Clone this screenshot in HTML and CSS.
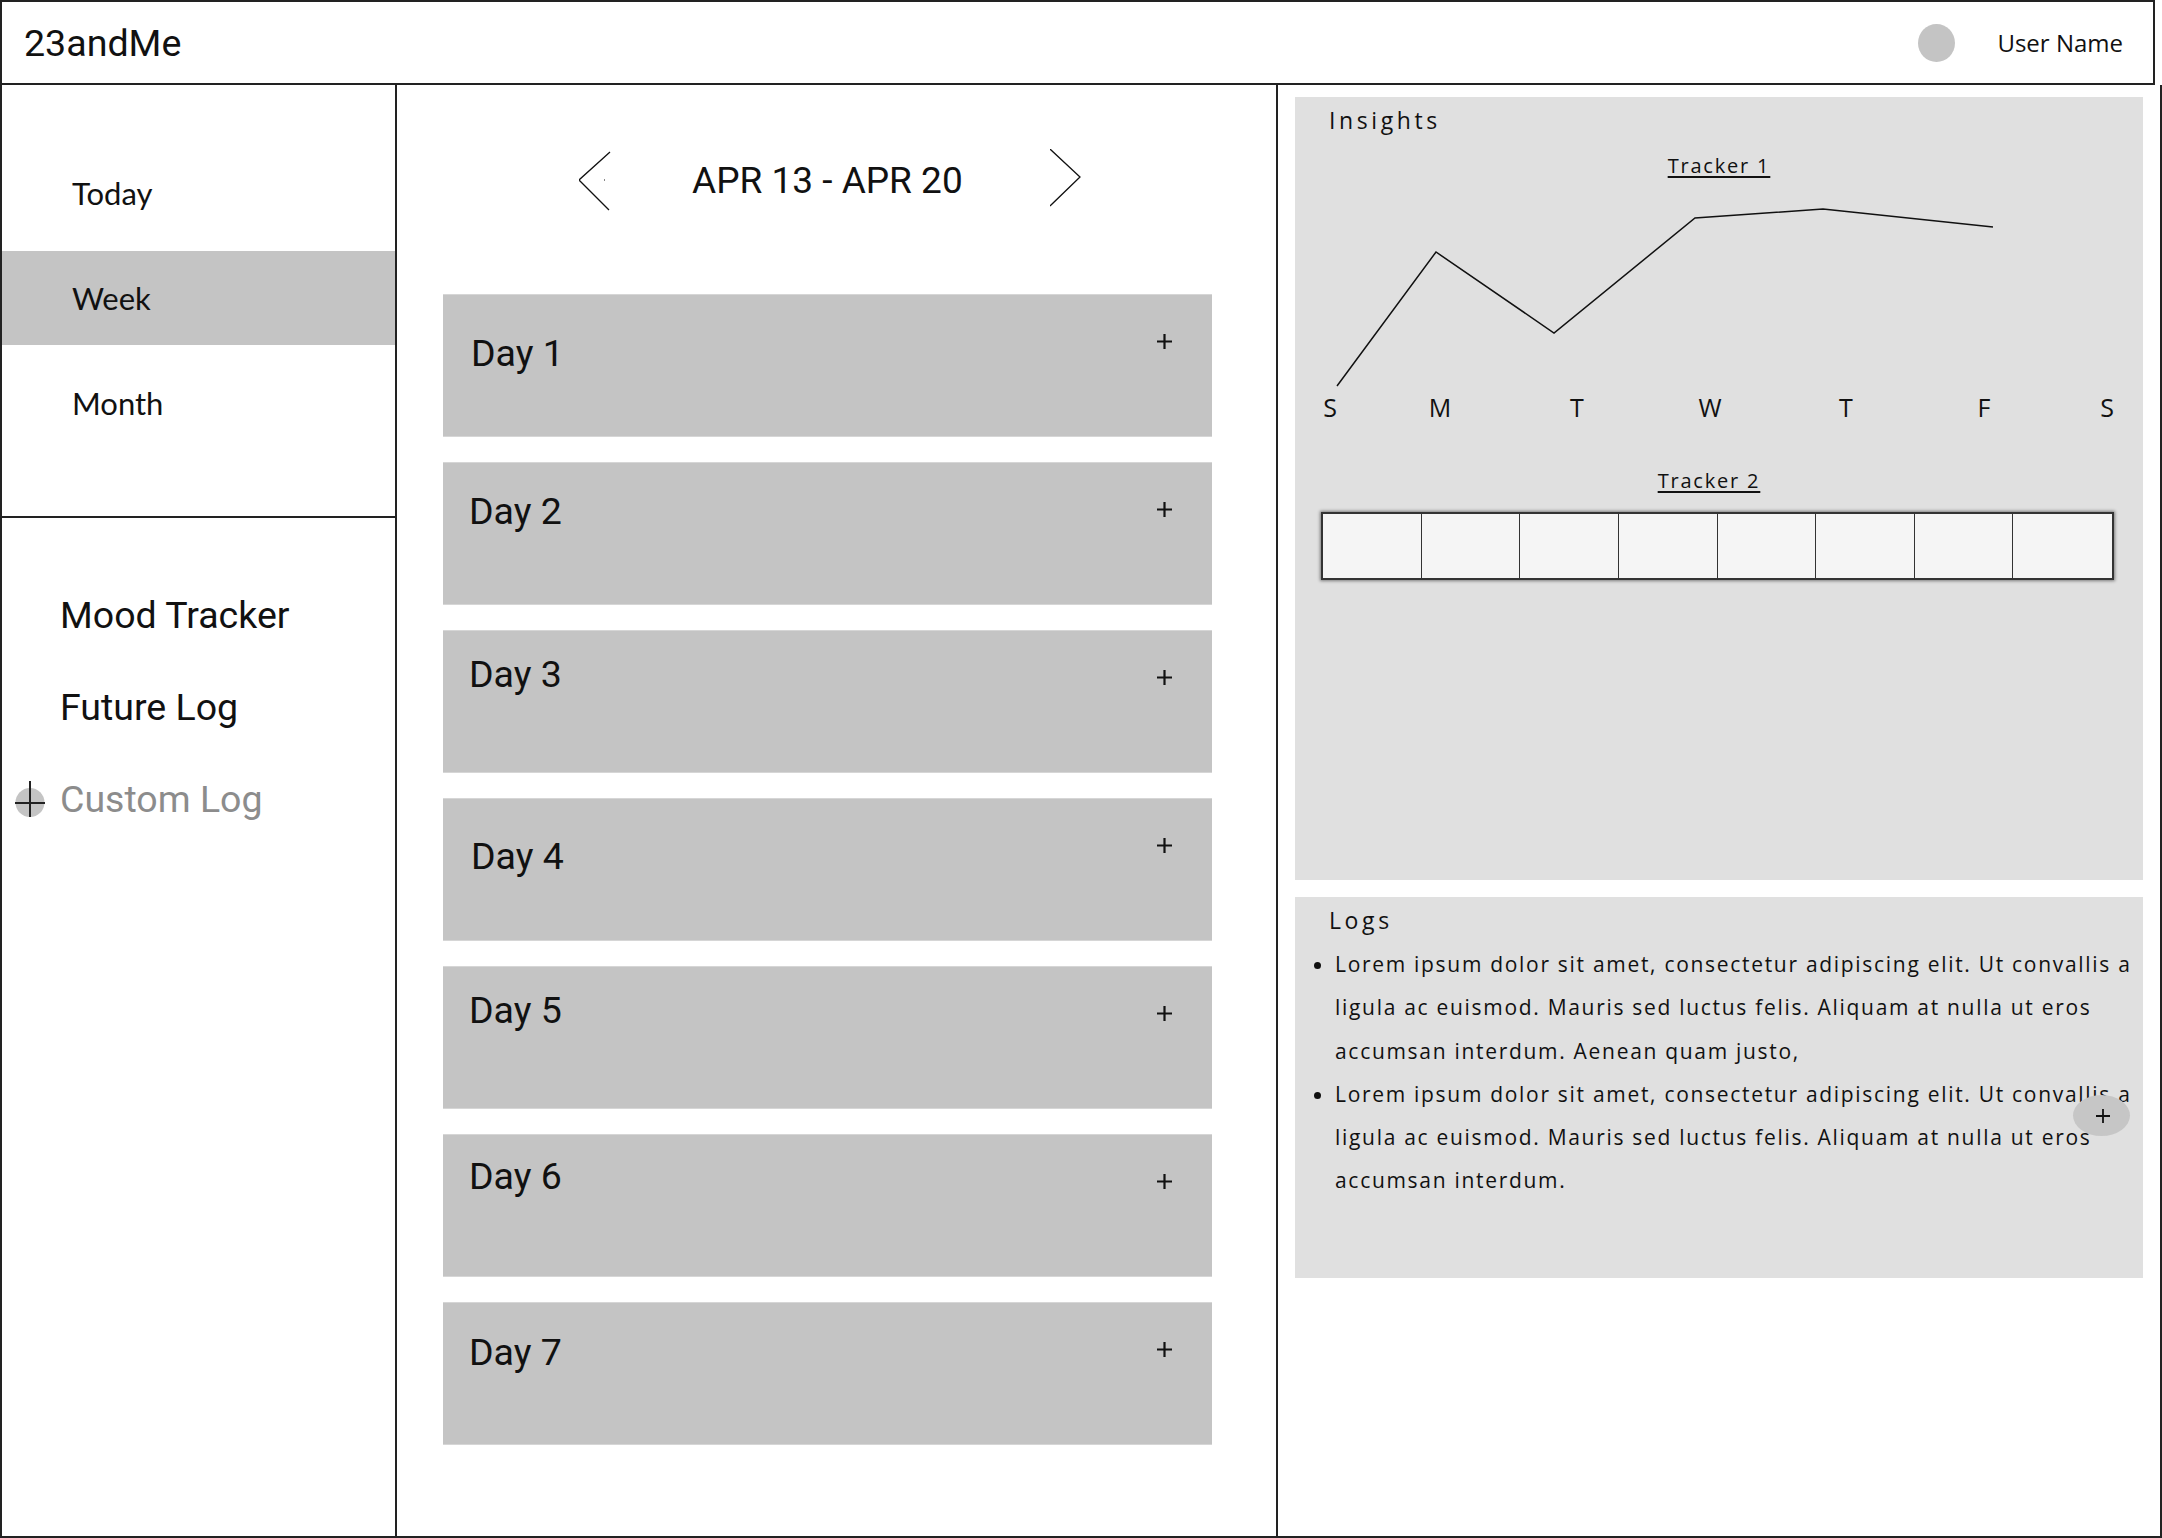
FILE: index.html
```html
<!DOCTYPE html>
<html lang="en">
<head>
<meta charset="utf-8">
<title>23andMe – Week</title>
<link rel="stylesheet" href="styles.css">
</head>
<body>
<div class="app">
  <header class="topbar">
    <div class="logo">23andMe</div>
    <div class="user">
      <span class="avatar"></span>
      <span class="user-name">User Name</span>
    </div>
  </header>

  <div class="main">
    <aside class="sidebar">
      <nav class="periods">
        <div class="period">Today</div>
        <div class="period active">Week</div>
        <div class="period">Month</div>
      </nav>
      <nav class="log-nav">
        <div class="log-link">Mood Tracker</div>
        <div class="log-link">Future Log</div>
        <div class="log-link custom">
          <svg class="add-circle" width="30" height="36" viewBox="0 0 30 36">
            <circle cx="15" cy="21.5" r="14.5" fill="#c4c4c4"/>
            <line x1="0" y1="22" x2="30" y2="22" stroke="#222" stroke-width="2"/>
            <line x1="15" y1="0" x2="15" y2="36" stroke="#222" stroke-width="2"/>
          </svg>
          <span>Custom Log</span>
        </div>
      </nav>
    </aside>

    <section class="week">
      <div class="week-nav">
        <svg class="chev chev-left" width="32" height="62" viewBox="0 0 32 62">
          <polyline points="31,3 0,31 30,61" fill="none" stroke="#111" stroke-width="1.3"/>
          <rect x="25" y="30.5" width="1" height="1" fill="#111"/>
        </svg>
        <h1 class="week-range">APR 13 - APR 20</h1>
        <svg class="chev chev-right" width="32" height="62" viewBox="0 0 32 62">
          <polyline points="0,0 30,28 0,57" fill="none" stroke="#111" stroke-width="1.3"/>
        </svg>
      </div>

      <div class="days">
        <div class="day day-1"><span class="day-label">Day 1</span><svg class="plus" width="15" height="15" viewBox="0 0 15 15"><path d="M7.5 0V15M0 7.5H15" stroke="#111" stroke-width="2.2"/></svg></div>
        <div class="day day-2"><span class="day-label">Day 2</span><svg class="plus" width="15" height="15" viewBox="0 0 15 15"><path d="M7.5 0V15M0 7.5H15" stroke="#111" stroke-width="2.2"/></svg></div>
        <div class="day day-3"><span class="day-label">Day 3</span><svg class="plus" width="15" height="15" viewBox="0 0 15 15"><path d="M7.5 0V15M0 7.5H15" stroke="#111" stroke-width="2.2"/></svg></div>
        <div class="day day-4"><span class="day-label">Day 4</span><svg class="plus" width="15" height="15" viewBox="0 0 15 15"><path d="M7.5 0V15M0 7.5H15" stroke="#111" stroke-width="2.2"/></svg></div>
        <div class="day day-5"><span class="day-label">Day 5</span><svg class="plus" width="15" height="15" viewBox="0 0 15 15"><path d="M7.5 0V15M0 7.5H15" stroke="#111" stroke-width="2.2"/></svg></div>
        <div class="day day-6"><span class="day-label">Day 6</span><svg class="plus" width="15" height="15" viewBox="0 0 15 15"><path d="M7.5 0V15M0 7.5H15" stroke="#111" stroke-width="2.2"/></svg></div>
        <div class="day day-7"><span class="day-label">Day 7</span><svg class="plus" width="15" height="15" viewBox="0 0 15 15"><path d="M7.5 0V15M0 7.5H15" stroke="#111" stroke-width="2.2"/></svg></div>
      </div>
    </section>

    <section class="panel">
      <div class="insights">
        <h2 class="box-title">Insights</h2>
        <h3 class="tracker-title">Tracker 1</h3>
        <svg class="chart" width="848" height="250" viewBox="0 0 848 250">
          <polyline points="42,207 141,73 259,154 400,39 528,30 698,48" fill="none" stroke="#111" stroke-width="1.5" stroke-linejoin="miter"/>
          <text class="wd" x="35" y="238">S</text>
          <text class="wd" x="145" y="238">M</text>
          <text class="wd" x="282" y="238">T</text>
          <text class="wd" x="415" y="238">W</text>
          <text class="wd" x="551" y="238">T</text>
          <text class="wd" x="689" y="238">F</text>
          <text class="wd" x="812" y="238">S</text>
        </svg>
        <h3 class="tracker-title tracker-2">Tracker 2</h3>
        <div class="habit-grid">
          <span class="cell"></span><span class="cell"></span><span class="cell"></span><span class="cell"></span>
          <span class="cell"></span><span class="cell"></span><span class="cell"></span><span class="cell"></span>
        </div>
      </div>

      <div class="logs">
        <h2 class="box-title">Logs</h2>
        <ul class="log-list">
          <li>Lorem ipsum dolor sit amet, consectetur adipiscing elit. Ut convallis a ligula ac euismod. Mauris sed luctus felis. Aliquam at nulla ut eros accumsan interdum. Aenean quam justo,</li>
          <li>Lorem ipsum dolor sit amet, consectetur adipiscing elit. Ut convallis a ligula ac euismod. Mauris sed luctus felis. Aliquam at nulla ut eros accumsan interdum.</li>
        </ul>
        <button class="fab" type="button" aria-label="Add log">
          <svg width="14" height="14" viewBox="0 0 14 14"><path d="M7 0V14M0 7H14" stroke="#111" stroke-width="1.8"/></svg>
        </button>
      </div>
    </section>
  </div>
</div>
</body>
</html>
```

FILE: styles.css
```css
* { box-sizing: border-box; }

html, body {
  margin: 0;
  padding: 0;
  background: #ffffff;
  color: #111111;
}

.app {
  width: 2162px;
  height: 1538px;
}

/* ---------- Header ---------- */
.topbar {
  width: 2155px;
  height: 85px;
  border: 2px solid #222222;
  display: flex;
  align-items: center;
  justify-content: space-between;
  padding: 0 30px 0 22px;
}

.logo {
  font-family: Roboto, "Liberation Sans", sans-serif;
  font-size: 37.6px;
  color: #111111;
}

.user {
  display: flex;
  align-items: center;
  gap: 42px;
}

.avatar {
  width: 37px;
  height: 38px;
  border-radius: 50%;
  background: #c4c4c4;
}

.user-name {
  font-family: "Open Sans", "DejaVu Sans", sans-serif;
  font-size: 24px;
  color: #111111;
}

/* ---------- Main grid ---------- */
.main {
  display: grid;
  grid-template-columns: 395px 881px 1fr;
  height: 1453px;
  border-left: 2px solid #222222;
  border-right: 2px solid #222222;
  border-bottom: 2px solid #222222;
}

/* ---------- Sidebar ---------- */
.sidebar {
  border-right: 2px solid #222222;
}

.periods {
  display: flex;
  flex-direction: column;
  gap: 11px;
  padding: 61px 0 66px;
  border-bottom: 2px solid #222222;
}

.period {
  height: 94px;
  display: flex;
  align-items: center;
  padding-left: 70px;
  font-family: Lato, "Open Sans", sans-serif;
  font-size: 31px;
  color: #111111;
}

.period.active {
  background: #c4c4c4;
}

.log-nav {
  display: flex;
  flex-direction: column;
  gap: 48px;
  padding-top: 75px;
}

.log-link {
  display: flex;
  align-items: center;
  padding-left: 58px;
  font-family: Roboto, "Liberation Sans", sans-serif;
  font-size: 37.5px;
  color: #111111;
}

.log-link.custom {
  padding-left: 13px;
  color: #8c8c8c;
}

.add-circle {
  display: block;
  margin-right: 15px;
  flex: none;
}

/* ---------- Week column ---------- */
.week {
  border-right: 2px solid #222222;
  padding-top: 64px;
}

.week-nav {
  display: flex;
  align-items: center;
  height: 62px;
  padding-left: 182px;
}

.chev {
  display: block;
  flex: none;
}

.week-range {
  margin: 0 87px 0 81px;
  font-family: Roboto, "Liberation Sans", sans-serif;
  font-weight: 400;
  font-size: 37px;
  color: #111111;
  white-space: nowrap;
}

.days {
  display: flex;
  flex-direction: column;
  gap: 25px;
  margin: 83px 0 0 46px;
  width: 769px;
}

.day {
  height: 143px;
  background: #c4c4c4;
  box-shadow: inset 0 1px 0 #d6d6d6, inset 0 -1px 0 #d6d6d6;
  display: flex;
  justify-content: space-between;
  align-items: flex-start;
  padding: 0 40px 0 26px;
}

.day-label {
  font-family: Roboto, "Liberation Sans", sans-serif;
  font-size: 37.5px;
  color: #111111;
}

.plus {
  display: block;
  margin-top: 40px;
  flex: none;
}

.day-1 { padding-left: 28px; }
.day-4 { padding-left: 28px; }
.day-1 .day-label { margin-top: 37px; }
.day-2 .day-label { margin-top: 27px; }
.day-3 .day-label { margin-top: 22px; }
.day-4 .day-label { margin-top: 36px; }
.day-5 .day-label { margin-top: 22px; }
.day-6 .day-label { margin-top: 20px; }
.day-7 .day-label { margin-top: 28px; }

/* ---------- Right panel ---------- */
.panel {
  display: flex;
  flex-direction: column;
  gap: 17px;
  padding: 12px 17px 0;
}

.insights,
.logs {
  background: #e0e0e0;
}

.insights {
  height: 783px;
  padding-top: 7px;
}

.box-title {
  margin: 0;
  padding-left: 34px;
  font-family: "Open Sans", "DejaVu Sans", sans-serif;
  font-weight: 400;
  font-size: 23px;
  letter-spacing: 3.6px;
  color: #111111;
}

.tracker-title {
  margin: 16px 0 0;
  text-align: center;
  font-family: "Open Sans", "DejaVu Sans", sans-serif;
  font-weight: 400;
  font-size: 20px;
  letter-spacing: 1.8px;
  text-decoration: underline;
  text-underline-offset: 3px;
  color: #111111;
}

.tracker-2 {
  margin-top: 38px;
  padding-right: 20px;
}

.chart {
  display: block;
}

.wd {
  font-family: "Open Sans", "DejaVu Sans", sans-serif;
  font-size: 25px;
  fill: #111111;
  text-anchor: middle;
}

.habit-grid {
  display: grid;
  grid-template-columns: repeat(8, 1fr);
  width: 793px;
  height: 68px;
  margin: 18px 0 0 26px;
  border: 2px solid #333333;
  box-shadow: 0 0 3px 1px rgba(0, 0, 0, 0.45);
  background: #f5f5f5;
}

.cell {
  border-right: 1px solid #333333;
}

.cell:last-child {
  border-right: none;
}

.logs {
  position: relative;
  height: 381px;
  padding-top: 7px;
}

.log-list {
  margin: 7px 0 0;
  padding-left: 40px;
  width: 846px;
  font-family: "Open Sans", "DejaVu Sans", sans-serif;
  font-size: 21px;
  line-height: 43.3px;
  letter-spacing: 1.7px;
  color: #111111;
}

.fab {
  position: absolute;
  right: 13px;
  top: 198px;
  width: 57px;
  height: 41px;
  border: none;
  border-radius: 50%;
  background: #c6c6c6;
  padding: 0;
  display: flex;
  align-items: center;
  justify-content: center;
}

.fab svg {
  display: block;
  margin-left: 3px;
}
```
